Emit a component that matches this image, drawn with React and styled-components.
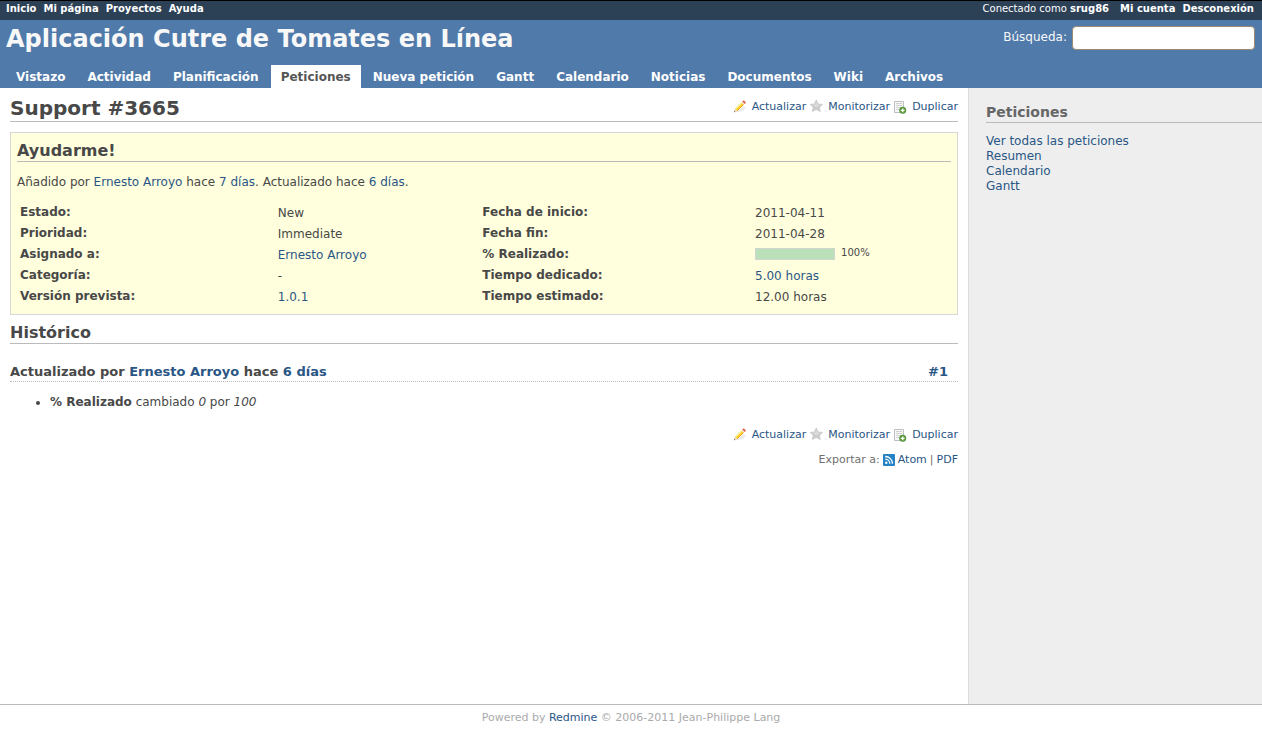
import React from "react";
import styled, { createGlobalStyle } from "styled-components";

const GlobalStyle = createGlobalStyle`
  *, *::before, *::after { box-sizing: border-box; }
  body {
    margin: 0;
    background: #fff;
    color: #484848;
    font-family: "DejaVu Sans", Verdana, sans-serif;
    font-size: 12px;
    line-height: 15px;
  }
  a { color: #2a5685; text-decoration: none; }
  a:hover { color: #c61a1a; text-decoration: underline; }
`;

const Page = styled.div`
  display: flex;
  flex-direction: column;
  min-height: 100vh;
`;

const TopMenu = styled.div`
  display: flex;
  justify-content: space-between;
  padding: 1px 8px 4px 6px;
  border-top: 1px solid #000;
  background: #2c4056;
  color: #fff;
  font-size: 10px;
  line-height: 14px;
`;

const MenuGroup = styled.nav`
  display: flex;
  gap: 7px;
`;

const MenuLink = styled.a`
  color: #fff;
  font-weight: bold;
`;

const LoggedAs = styled.span`
  margin-right: 4px;
`;

const Header = styled.header`
  background: #507aaa;
  color: #f8f8f8;
`;

const Banner = styled.div`
  display: flex;
  justify-content: space-between;
  align-items: flex-start;
  padding: 5px 7px 0 6px;
  height: 45px;
`;

const AppTitle = styled.h1`
  margin: 0;
  font-size: 24px;
  line-height: 28px;
`;

const SearchForm = styled.form`
  display: flex;
  align-items: center;
  gap: 5px;
`;

const SearchInput = styled.input`
  width: 183px;
  height: 24px;
  margin-top: 1px;
  padding: 3px;
  border: 1px solid #9c8b70;
  border-radius: 4px;
  background: #fff;
  font: inherit;
`;

const Tabs = styled.nav`
  display: flex;
  gap: 2px;
  padding: 0 6px;
`;

const Tab = styled.a`
  padding: 5px 10px 3px;
  background: ${(p) => (p.$active ? "#fff" : "transparent")};
  color: ${(p) => (p.$active ? "#555" : "#fff")};
  font-weight: bold;
`;

const Main = styled.div`
  display: flex;
  flex: 1;
`;

const Content = styled.main`
  flex: 1;
  min-width: 0;
  padding: 8px 10px 10px;
`;

const Sidebar = styled.aside`
  width: 294px;
  padding: 15px 0 0 17px;
  border-left: 1px solid #ddd;
  background: #eee;
`;

const SidebarTitle = styled.h3`
  margin: 0 0 11px;
  padding-bottom: 1px;
  border-bottom: 1px solid #bbb;
  color: #666;
  font-size: 14px;
  line-height: 18px;
`;

const SidebarLinks = styled.nav`
  display: flex;
  flex-direction: column;
  align-items: flex-start;
`;

const TitleBar = styled.div`
  display: flex;
  justify-content: space-between;
  margin-bottom: 10px;
  padding-bottom: 1px;
  border-bottom: 1px solid #bbb;
`;

const IssueId = styled.h2`
  margin: 0;
  font-size: 20px;
  line-height: 24px;
`;

const Actions = styled.div`
  display: flex;
  justify-content: flex-end;
  gap: 2px;
  padding-top: 2px;
  font-size: 11px;
  line-height: 18px;
`;

const ActionLink = styled.a`
  display: flex;
  gap: 4px;
  height: 16px;
`;

const Issue = styled.section`
  padding: 7px 6px 6px;
  border: 1px solid #d7d7d7;
  background: #ffffdd;
`;

const SectionTitle = styled.h3`
  margin: 0 0 13px;
  padding-top: 1px;
  border-bottom: 1px solid #bbb;
  font-size: 16px;
  line-height: 20px;
`;

const Author = styled.p`
  margin: 0 0 13px;
`;

const Attributes = styled.table`
  width: 100%;
  table-layout: fixed;
  border-collapse: collapse;
`;

const Column = styled.col`
  width: ${(p) => p.$width};
`;

const Label = styled.th`
  padding: 2px 3px 5px;
  line-height: 14px;
  text-align: left;
  vertical-align: top;
`;

const Value = styled.td`
  padding: 2px 3px 3px;
  line-height: 16px;
  vertical-align: top;
`;

const Progress = styled.div`
  display: flex;
  gap: 6px;
  height: 16px;
  font-size: 10px;
  line-height: 12px;
`;

const ProgressTrack = styled.div`
  width: 80px;
  height: 12px;
  margin-top: 1px;
  border: 1px solid #d0d6d0;
  background: #fff;
`;

const ProgressFill = styled.div`
  height: 100%;
  background: #bae0ba;
`;

const History = styled.section`
  margin: 7px 0 14px;
`;

const JournalTitle = styled.h4`
  display: flex;
  justify-content: space-between;
  margin: 20px 0 13px;
  padding: 0 10px 1px 0;
  border-bottom: 1px dotted #bbb;
  font-size: 13px;
  line-height: 16px;
`;

const Details = styled.ul`
  margin: 0;
  padding-left: 40px;
`;

const Export = styled.p`
  display: flex;
  justify-content: flex-end;
  gap: 3px;
  margin: 10px 0 0;
  color: #707070;
  font-size: 11px;
  line-height: 16px;
`;

const AtomLink = styled.a`
  display: flex;
  align-items: center;
  gap: 3px;
`;

const Footer = styled.footer`
  padding: 5px 0 6px;
  border-top: 1px solid #bbb;
  color: #aaa;
  font-size: 11px;
  line-height: 16px;
  text-align: center;
`;

const PencilIcon = () => (
  <svg width="16" height="16" viewBox="0 0 16 16" aria-hidden="true">
    <path d="M4 14.500 11 13 14 9.500 11 8.500z" fill="#ddd" opacity=".6" />
    <path d="M2.200 14 3.200 10.800 5.400 13z" fill="#f7e3c4" stroke="#d9b489" strokeWidth=".4" />
    <path d="M1.900 14.300 2.500 12.900 3.400 13.800z" fill="#555" />
    <path d="M3.200 10.800 9.600 4.400 11.800 6.600 5.400 13z" fill="#ffd530" />
    <path d="M5.200 12.800 11.600 6.400" stroke="#e8951c" strokeWidth=".9" />
    <path d="M3.900 10.900 9.900 4.900" stroke="#fff3a0" strokeWidth="1" />
    <path d="M9.600 4.400 10.500 3.500 12.700 5.700 11.800 6.600z" fill="#ece6e2" />
    <path d="M10.500 3.500 11 3Q11.800 2.400 12.900 3.400T13.200 5.200L12.700 5.700z" fill="#e9604a" stroke="#d84c3a" strokeWidth=".4" />
  </svg>
);

const StarIcon = () => (
  <svg width="16" height="16" viewBox="0 0 16 16" aria-hidden="true">
    <path
      d="M8.300 1.900 10.300 5.900 14.500 6.400 11.500 9.400 12.300 13.600 8.300 11.600 4.300 13.600 5.100 9.400 2.100 6.400 6.300 5.900z"
      fill="#cbcbcb"
      stroke="#c2c2c2"
      strokeWidth=".6"
      strokeLinejoin="round"
    />
    <path d="M8.300 3.500 9.800 6.700 12.600 7.100 8.300 9.200 4 7.100 6.800 6.700z" fill="#dadada" />
  </svg>
);

const DuplicateIcon = () => (
  <svg width="16" height="16" viewBox="0 0 16 16" aria-hidden="true">
    <path d="M2.500 3.500h9v11h-9z" fill="#f8f8f8" stroke="#bcc0c3" />
    <path d="M4 5.500h6M4 7.500h6M4 9.500h5M4 11.500h3" stroke="#d0d0d0" />
    <circle cx="10.700" cy="12.300" r="3.200" fill="#5f9f3a" stroke="#437d28" strokeWidth=".6" />
    <path d="M10.700 10.400v3.800M8.800 12.300h3.800" stroke="#fff" strokeWidth="1.300" />
  </svg>
);

const FeedIcon = () => (
  <svg width="12" height="12" viewBox="0 0 12 12" aria-hidden="true">
    <rect width="12" height="12" rx="1" fill="#2582c4" />
    <circle cx="3.300" cy="8.800" r="1.200" fill="#fff" />
    <path d="M2.200 5.200a4.600 4.600 0 0 1 4.600 4.600M2.200 2.500a7.300 7.300 0 0 1 7.300 7.300" fill="none" stroke="#fff" strokeWidth="1.300" />
  </svg>
);

const tabs = [
  "Vistazo", "Actividad", "Planificación", "Peticiones", "Nueva petición", "Gantt",
  "Calendario", "Noticias", "Documentos", "Wiki", "Archivos",
];

const done = 100;

const attributes = [
  ["Estado:", "New", "Fecha de inicio:", "2011-04-11"],
  ["Prioridad:", "Immediate", "Fecha fin:", "2011-04-28"],
  [
    "Asignado a:",
    <a href="#user">Ernesto Arroyo</a>,
    "% Realizado:",
    <Progress>
      <ProgressTrack>
        <ProgressFill style={{ width: `${done}%` }} />
      </ProgressTrack>
      <span>{done}%</span>
    </Progress>,
  ],
  ["Categoría:", "-", "Tiempo dedicado:", <a href="#time">5.00 horas</a>],
  ["Versión prevista:", <a href="#version">1.0.1</a>, "Tiempo estimado:", "12.00 horas"],
];

const IssueActions = () => (
  <Actions>
    <ActionLink href="#update"><PencilIcon />Actualizar</ActionLink>
    <ActionLink href="#watch"><StarIcon />Monitorizar</ActionLink>
    <ActionLink href="#copy"><DuplicateIcon />Duplicar</ActionLink>
  </Actions>
);

export default function App() {
  return (
    <Page>
      <GlobalStyle />
      <TopMenu>
        <MenuGroup>
          {["Inicio", "Mi página", "Proyectos", "Ayuda"].map((label) => (
            <MenuLink key={label} href="#menu">{label}</MenuLink>
          ))}
        </MenuGroup>
        <MenuGroup>
          <LoggedAs>Conectado como <MenuLink href="#me">srug86</MenuLink></LoggedAs>
          <MenuLink href="#account">Mi cuenta</MenuLink>
          <MenuLink href="#logout">Desconexión</MenuLink>
        </MenuGroup>
      </TopMenu>
      <Header>
        <Banner>
          <AppTitle>Aplicación Cutre de Tomates en Línea</AppTitle>
          <SearchForm role="search">
            <label htmlFor="q">Búsqueda:</label>
            <SearchInput id="q" type="text" />
          </SearchForm>
        </Banner>
        <Tabs>
          {tabs.map((tab) => (
            <Tab key={tab} href="#tab" $active={tab === "Peticiones"}>{tab}</Tab>
          ))}
        </Tabs>
      </Header>
      <Main>
        <Content>
          <TitleBar>
            <IssueId>Support #3665</IssueId>
            <IssueActions />
          </TitleBar>
          <Issue>
            <SectionTitle>Ayudarme!</SectionTitle>
            <Author>
              Añadido por <a href="#user">Ernesto Arroyo</a> hace <a href="#date">7 días</a>. Actualizado
              hace <a href="#date">6 días</a>.
            </Author>
            <Attributes>
              <colgroup>
                <Column $width="27.6%" />
                <Column $width="21.9%" />
                <Column $width="29.2%" />
                <Column />
              </colgroup>
              <tbody>
                {attributes.map(([leftLabel, leftValue, rightLabel, rightValue]) => (
                  <tr key={leftLabel}>
                    <Label scope="row">{leftLabel}</Label>
                    <Value>{leftValue}</Value>
                    <Label scope="row">{rightLabel}</Label>
                    <Value>{rightValue}</Value>
                  </tr>
                ))}
              </tbody>
            </Attributes>
          </Issue>
          <History>
            <SectionTitle>Histórico</SectionTitle>
            <JournalTitle>
              <span>
                Actualizado por <a href="#user">Ernesto Arroyo</a> hace <a href="#date">6 días</a>
              </span>
              <a href="#note-1">#1</a>
            </JournalTitle>
            <Details>
              <li><strong>% Realizado</strong> cambiado <i>0</i> por <i>100</i></li>
            </Details>
          </History>
          <IssueActions />
          <Export>
            <span>Exportar a:</span>
            <AtomLink href="#atom"><FeedIcon />Atom</AtomLink>
            <span>|</span>
            <a href="#pdf">PDF</a>
          </Export>
        </Content>
        <Sidebar>
          <SidebarTitle>Peticiones</SidebarTitle>
          <SidebarLinks>
            <a href="#issues">Ver todas las peticiones</a>
            <a href="#summary">Resumen</a>
            <a href="#calendar">Calendario</a>
            <a href="#gantt">Gantt</a>
          </SidebarLinks>
        </Sidebar>
      </Main>
      <Footer>
        Powered by <a href="#redmine">Redmine</a> © 2006-2011 Jean-Philippe Lang
      </Footer>
    </Page>
  );
}
